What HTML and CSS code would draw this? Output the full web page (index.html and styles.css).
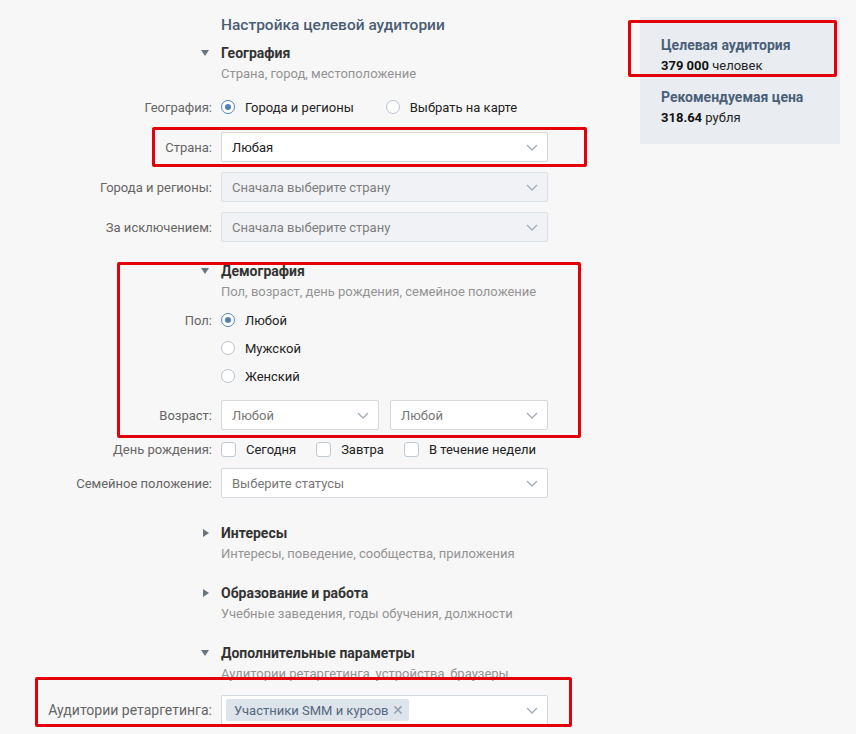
FILE: index.html
```html
<!DOCTYPE html>
<html lang="ru">
<head>
    <meta charset="UTF-8">
    <meta name="viewport" content="width=device-width, initial-scale=1.0">
    <title>Настройка целевой аудитории</title>
    <link rel="stylesheet" href="styles.css">
</head>
<body>
    <div class="page">
        <div class="form">
            <h1 class="form-title">Настройка целевой аудитории</h1>

            <!-- География -->
            <div class="section-head section-head--first">
                <span class="arrow"><svg width="8" height="6" viewBox="0 0 8 6"><path d="M0 0H8L4 6Z" fill="#6b7580"/></svg></span>
                <span class="section-title">География</span>
            </div>
            <div class="section-sub">Страна, город, местоположение</div>

            <div class="row row--radio row--geo">
                <span class="label">География:</span>
                <div class="options">
                    <span class="option"><span class="radio radio--on"></span>Города и регионы</span>
                    <span class="option option--wide"><span class="radio"></span>Выбрать на карте</span>
                </div>
            </div>
            <div class="row row--select row--first-select">
                <span class="label">Страна:</span>
                <div class="select"><span class="select-text">Любая</span><span class="chevron"><svg width="12" height="7" viewBox="0 0 12 7"><polyline points="1,1 6,6 11,1" fill="none" stroke="#a3adb8" stroke-width="1.3"/></svg></span></div>
            </div>
            <div class="row row--select">
                <span class="label">Города и регионы:</span>
                <div class="select select--disabled"><span class="select-text">Сначала выберите страну</span><span class="chevron"><svg width="12" height="7" viewBox="0 0 12 7"><polyline points="1,1 6,6 11,1" fill="none" stroke="#a3adb8" stroke-width="1.3"/></svg></span></div>
            </div>
            <div class="row row--select">
                <span class="label">За исключением:</span>
                <div class="select select--disabled"><span class="select-text">Сначала выберите страну</span><span class="chevron"><svg width="12" height="7" viewBox="0 0 12 7"><polyline points="1,1 6,6 11,1" fill="none" stroke="#a3adb8" stroke-width="1.3"/></svg></span></div>
            </div>

            <!-- Демография -->
            <div class="section-head">
                <span class="arrow"><svg width="8" height="6" viewBox="0 0 8 6"><path d="M0 0H8L4 6Z" fill="#6b7580"/></svg></span>
                <span class="section-title">Демография</span>
            </div>
            <div class="section-sub">Пол, возраст, день рождения, семейное положение</div>

            <div class="row row--radio row--sex">
                <span class="label">Пол:</span>
                <span class="option"><span class="radio radio--on"></span>Любой</span>
            </div>
            <div class="row row--radio">
                <span class="label"></span>
                <span class="option"><span class="radio"></span>Мужской</span>
            </div>
            <div class="row row--radio">
                <span class="label"></span>
                <span class="option"><span class="radio"></span>Женский</span>
            </div>
            <div class="row row--select row--age">
                <span class="label">Возраст:</span>
                <div class="select-pair">
                    <div class="select select--half"><span class="select-text select-text--muted">Любой</span><span class="chevron"><svg width="12" height="7" viewBox="0 0 12 7"><polyline points="1,1 6,6 11,1" fill="none" stroke="#a3adb8" stroke-width="1.3"/></svg></span></div>
                    <div class="select select--half"><span class="select-text select-text--muted">Любой</span><span class="chevron"><svg width="12" height="7" viewBox="0 0 12 7"><polyline points="1,1 6,6 11,1" fill="none" stroke="#a3adb8" stroke-width="1.3"/></svg></span></div>
                </div>
            </div>
            <div class="row row--radio row--birthday">
                <span class="label">День рождения:</span>
                <div class="options">
                    <span class="option"><span class="checkbox"></span>Сегодня</span>
                    <span class="option"><span class="checkbox"></span>Завтра</span>
                    <span class="option"><span class="checkbox"></span>В течение недели</span>
                </div>
            </div>
            <div class="row row--select row--family">
                <span class="label">Семейное положение:</span>
                <div class="select"><span class="select-text select-text--muted">Выберите статусы</span><span class="chevron"><svg width="12" height="7" viewBox="0 0 12 7"><polyline points="1,1 6,6 11,1" fill="none" stroke="#a3adb8" stroke-width="1.3"/></svg></span></div>
            </div>

            <!-- Интересы -->
            <div class="section-head section-head--wide">
                <span class="arrow"><svg width="6" height="8" viewBox="0 0 6 8"><path d="M0 0V8L6 4Z" fill="#6b7580"/></svg></span>
                <span class="section-title">Интересы</span>
            </div>
            <div class="section-sub">Интересы, поведение, сообщества, приложения</div>

            <!-- Образование -->
            <div class="section-head">
                <span class="arrow"><svg width="6" height="8" viewBox="0 0 6 8"><path d="M0 0V8L6 4Z" fill="#6b7580"/></svg></span>
                <span class="section-title">Образование и работа</span>
            </div>
            <div class="section-sub">Учебные заведения, годы обучения, должности</div>

            <!-- Дополнительные параметры -->
            <div class="section-head">
                <span class="arrow"><svg width="8" height="6" viewBox="0 0 8 6"><path d="M0 0H8L4 6Z" fill="#6b7580"/></svg></span>
                <span class="section-title">Дополнительные параметры</span>
            </div>
            <div class="section-sub">Аудитории ретаргетинга, устройства, браузеры</div>

            <div class="row row--select row--first-select">
                <span class="label label--large">Аудитории ретаргетинга:</span>
                <div class="select select--tags">
                    <span class="tag">Участники SMM и курсов <span class="tag-x">✕</span></span>
                    <span class="chevron"><svg width="12" height="7" viewBox="0 0 12 7"><polyline points="1,1 6,6 11,1" fill="none" stroke="#a3adb8" stroke-width="1.3"/></svg></span>
                </div>
            </div>
        </div>

        <div class="summary">
            <div class="summary-block">
                <div class="summary-title">Целевая аудитория</div>
                <div class="summary-value"><b>379 000</b> человек</div>
            </div>
            <div class="summary-block summary-block--next">
                <div class="summary-title">Рекомендуемая цена</div>
                <div class="summary-value"><b>318.64</b> рубля</div>
            </div>
        </div>
    </div>

    <!-- пометки поверх скриншота -->
    <div class="mark mark--country"></div>
    <div class="mark mark--audience"></div>
    <div class="mark mark--demography"></div>
    <div class="mark mark--retarget"></div>
</body>
</html>
```

FILE: styles.css
```css
body {
    margin: 0;
    padding: 0;
    font-family: Roboto, "Liberation Sans", Arial, sans-serif;
    font-size: 13px;
    color: #000;
    background-color: #f7f7f7;
    position: relative;
    width: 856px;
    height: 734px;
    overflow: hidden;
}
.page {
    display: flex;
    align-items: flex-start;
}
.form {
    width: 640px;
    padding-top: 15px;
}
.form-title {
    margin: 0 0 0 221px;
    font-size: 15.5px;
    font-weight: 500;
    line-height: 20px;
    color: #4b5d74;
}

/* sections */
.section-head {
    display: flex;
    align-items: center;
    height: 20px;
    margin-top: 19px;
}
.section-head--first {
    margin-top: 8px;
}
.section-head--wide {
    margin-top: 25px;
}
.arrow {
    flex: 0 0 212px;
    display: flex;
    justify-content: flex-end;
    padding-right: 3px;
    box-sizing: border-box;
}
.arrow svg {
    display: block;
}
.section-title {
    margin-left: 9px;
    font-size: 14px;
    font-weight: 700;
    color: #333;
}
.section-sub {
    margin: 1px 0 0 221px;
    line-height: 20px;
    color: #939393;
}

/* rows */
.row {
    display: flex;
    align-items: center;
}
.row--radio {
    height: 28px;
}
.row--select {
    margin-top: 10px;
}
.row--geo {
    margin-top: 9px;
}
.row--first-select {
    margin-top: 11px;
}
.row--sex {
    margin-top: 4px;
}
.row--birthday {
    margin-top: 5px;
}
.row--family {
    margin-top: 5px;
}
.label {
    flex: 0 0 212px;
    text-align: right;
    margin-right: 9px;
    color: #656565;
}
.label--large {
    font-size: 14px;
}
.options {
    display: flex;
    gap: 20px;
}
.option {
    display: flex;
    align-items: center;
    color: #222;
}
.option--wide {
    margin-left: 12px;
}
.radio {
    width: 14px;
    height: 14px;
    box-sizing: border-box;
    border: 1px solid #b9c2cc;
    border-radius: 50%;
    background: #fff;
    margin-right: 10px;
    display: flex;
    align-items: center;
    justify-content: center;
}
.radio--on {
    border-color: #5181b8;
}
.radio--on::after {
    content: "";
    width: 6px;
    height: 6px;
    border-radius: 50%;
    background: #5181b8;
}
.checkbox {
    width: 15px;
    height: 15px;
    box-sizing: border-box;
    border: 1px solid #c0cad5;
    border-radius: 3px;
    background: #fff;
    margin-right: 10px;
}

/* selects */
.select {
    width: 327px;
    height: 30px;
    box-sizing: border-box;
    border: 1px solid #d3d9de;
    border-radius: 2px;
    background: #fff;
    display: flex;
    align-items: center;
    justify-content: space-between;
    padding: 0 9px 0 10px;
}
.select--disabled {
    background: #f0f2f5;
    border-color: #dbe0e5;
}
.select--disabled .select-text {
    color: #7d7d7d;
}
.select--half {
    width: 158px;
}
.select-pair {
    display: flex;
    gap: 11px;
}
.select-text {
    color: #222;
}
.select-text--muted {
    color: #777;
}
.chevron svg {
    display: block;
}
.select--tags {
    padding-left: 4px;
}
.tag {
    display: flex;
    align-items: center;
    height: 22px;
    padding: 0 5px 0 8px;
    border-radius: 2px;
    background: #dde4ec;
    color: #55677d;
}
.tag-x {
    margin-left: 4px;
    color: #8d9cad;
    font-size: 14px;
}

/* right panel */
.summary {
    width: 200px;
    margin-top: 17px;
    padding: 18px 0 16px 21px;
    box-sizing: border-box;
    background: #e9edf1;
}
.summary-block--next {
    margin-top: 11px;
}
.summary-title {
    font-size: 14px;
    font-weight: 700;
    line-height: 20px;
    color: #4b5f78;
}
.summary-value {
    line-height: 21px;
    color: #222;
}
.summary-value b {
    color: #111;
}

/* red annotation frames */
.mark {
    position: absolute;
    box-sizing: border-box;
    border: 3px solid #e3000b;
    border-radius: 2px;
}
.mark--country {
    left: 152px;
    top: 127px;
    width: 435px;
    height: 40px;
}
.mark--audience {
    left: 628px;
    top: 20px;
    width: 209px;
    height: 57px;
}
.mark--demography {
    left: 117px;
    top: 262px;
    width: 464px;
    height: 176px;
}
.mark--retarget {
    left: 35px;
    top: 677px;
    width: 537px;
    height: 50px;
}
```
